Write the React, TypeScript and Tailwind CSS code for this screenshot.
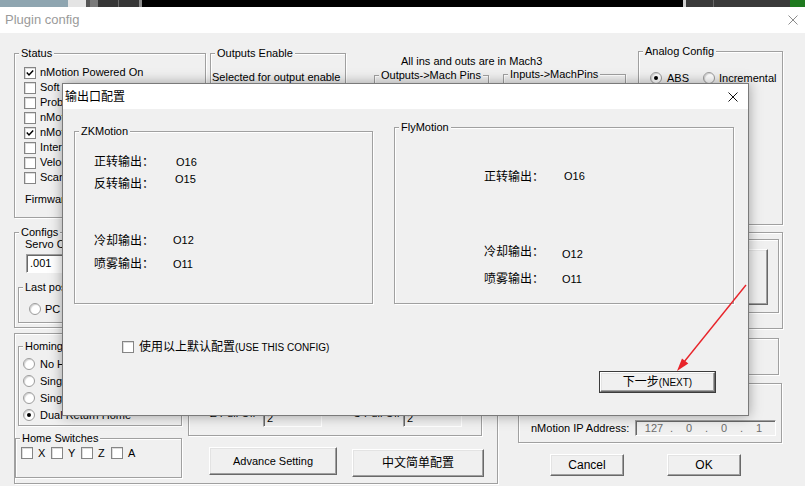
import React from "react";

type P = { className?: string; children?: React.ReactNode };

function Group({ label, className = "", children }: P & { label?: string }) {
  return (
    <div
      className={`relative shrink-0 border border-[#a0a0a0] shadow-[inset_1px_1px_0_#ffffff,1px_1px_0_#ffffff] ${className}`}
    >
      {label ? (
        <span className="absolute left-[4px] top-[-8px] whitespace-nowrap bg-[#f0f0f0] px-[2px] text-[11px] leading-[14px]">
          {label}
        </span>
      ) : null}
      {children}
    </div>
  );
}

function Check({ checked = false, className = "" }: { checked?: boolean; className?: string }) {
  return (
    <span
      className={`flex h-[12px] w-[12px] shrink-0 items-center justify-center border border-[#858585] bg-white shadow-[inset_1px_1px_0_#dcdcdc] ${className}`}
    >
      {checked ? (
        <svg width="8" height="8" viewBox="0 0 8 8">
          <path d="M0.8 3.6 L3 5.9 L7.2 1.4" fill="none" stroke="#000" strokeWidth="1.5" />
        </svg>
      ) : null}
    </span>
  );
}

function Radio({ checked = false }: { checked?: boolean }) {
  return (
    <span className="flex h-[12px] w-[12px] shrink-0 items-center justify-center rounded-full border border-[#9c9c9c] bg-white shadow-[inset_1px_1px_1px_rgba(0,0,0,0.18)]">
      {checked ? <span className="h-[4px] w-[4px] rounded-full bg-black" /> : null}
    </span>
  );
}

function Btn({ className = "", children }: P) {
  return (
    <div
      className={`flex shrink-0 items-center justify-center whitespace-nowrap border border-t-[#ffffff] border-l-[#ffffff] border-r-[#696969] border-b-[#696969] bg-[#f0f0f0] shadow-[inset_-1px_-1px_0_#a0a0a0,inset_1px_1px_0_#e3e3e3] text-[11px] ${className}`}
    >
      {children}
    </div>
  );
}

const sunken =
  "border border-t-[#a0a0a0] border-l-[#a0a0a0] border-r-[#ffffff] border-b-[#ffffff] shadow-[inset_1px_1px_0_#696969]";

const statusItems: [string, boolean][] = [
  ["nMotion Powered On", true],
  ["Soft Limits", false],
  ["Probe Active", false],
  ["nMotion Running", false],
  ["nMotion Connected", true],
  ["Interpolation", false],
  ["Velocity Mode", false],
  ["Scan Mode", false],
];

const homing: [string, boolean][] = [
  ["No Homing", false],
  ["Single Home Switch", false],
  ["Single Return Home", false],
  ["Dual Return Home", true],
];

export default function App() {
  return (
    <div className="relative h-[486px] w-[805px] overflow-hidden bg-[#f0f0f0] font-['Liberation_Sans','Noto_Sans_CJK_SC',sans-serif] text-[11px] text-black">
      {/* desktop strip behind window */}
      <div className="flex h-[7px]">
        <div className="w-[68px] bg-[#8ea5b0]" />
        <div className="w-[18px] bg-[#e4e4e4]" />
        <div className="w-[4px] bg-[#555555]" />
        <div className="w-[8px] bg-[#7a7a7a]" />
        <div className="w-[20px] bg-[#363636]" />
        <div className="w-[1px] bg-[#6a6a6a]" />
        <div className="w-[20px] bg-[#363636]" />
        <div className="w-[3px] bg-[#8a8a8a]" />
        <div className="w-[541px] bg-black" />
        <div className="w-[3px] bg-[#cfcfcf]" />
        <div className="w-[27px] bg-[#3a3a3a]" />
        <div className="w-[1px] bg-[#666666]" />
        <div className="w-[76px] bg-[#3a3a3a]" />
        <div className="w-[15px] bg-[#1f7a1f]" />
      </div>

      {/* Plugin config title bar */}
      <div className="flex h-[26px] items-center justify-between bg-white pl-[5px] pr-[7px]">
        <span className="text-[13px] leading-[16px] text-[#9a9a9a]">Plugin config</span>
        <svg width="10" height="10" viewBox="0 0 10 10">
          <path d="M0.5 0.5 L9.5 9.5 M9.5 0.5 L0.5 9.5" stroke="#8c8c8c" strokeWidth="1" />
        </svg>
      </div>

      {/* Row 1 */}
      <div className="flex items-start pt-[18px]">
        <Group label="Status" className="ml-[14px] mt-[2px] h-[165px] w-[192px]">
          <div className="flex flex-col pt-[11px]">
            {statusItems.map(([t, c]) => (
              <div key={t} className="flex h-[15px] items-center gap-[4px] pl-[9px]">
                <Check checked={c} />
                <span className="whitespace-nowrap leading-[15px]">{t}</span>
              </div>
            ))}
            <div className="mt-[7px] whitespace-nowrap pl-[10px] leading-[15px]">Firmware Version:</div>
          </div>
        </Group>

        <Group label="Outputs Enable" className="ml-[4px] mt-[2px] h-[165px] w-[136px]">
          <div className="whitespace-nowrap pl-[1px] pt-[16px] leading-[14px]">Selected for output enable</div>
        </Group>

        <div className="ml-[28px] mt-[3px] flex w-[252px] shrink-0 flex-col">
          <div className="whitespace-nowrap pl-[27px] leading-[14px]">All ins and outs are in Mach3</div>
          <div className="flex items-start">
            <Group label="Outputs->Mach Pins" className="mt-[7px] h-[140px] w-[115px]" />
            <Group label="Inputs->MachPins" className="ml-[14px] mt-[6px] h-[140px] w-[123px]" />
          </div>
        </div>

        <Group label="Analog Config" className="ml-[12px] h-[174px] w-[145px]">
          <div className="flex items-center pl-[11px] pt-[19px]">
            <Radio checked />
            <span className="ml-[5px] leading-[14px]">ABS</span>
            <span className="ml-[14px]">
              <Radio />
            </span>
            <span className="ml-[4px] whitespace-nowrap leading-[14px]">Incremental</span>
          </div>
        </Group>
      </div>

      {/* Row 2 */}
      <div className="flex items-start pt-[7px]">
        <div className="ml-[14px] flex w-[484px] shrink-0 flex-col">
          <Group label="Configs" className="h-[96px] w-[190px]">
            <div className="flex flex-col">
              <div className="whitespace-nowrap pl-[10px] pt-[5px] leading-[13px]">Servo Cycle Time</div>
              <div className={`ml-[11px] mt-[3px] h-[19px] w-[100px] bg-white pl-[3px] leading-[17px] ${sunken}`}>.001</div>
              <Group label="Last position" className="ml-[3px] mt-[14px] h-[36px] w-[180px]">
                <div className="flex items-center gap-[4px] pl-[10px] pt-[15px]">
                  <Radio />
                  <span className="leading-[12px]">PC</span>
                </div>
              </Group>
            </div>
          </Group>

          <div className="mt-[5px] flex h-[151px] w-[484px] items-start border border-[#a0a0a0] shadow-[inset_1px_1px_0_#ffffff,1px_1px_0_#ffffff]">
            <div className="flex w-[167px] shrink-0 flex-col">
              <Group label="Homing" className="ml-[3px] mt-[12px] h-[80px] w-[164px]">
                <div className="flex flex-col pl-[4px] pt-[8px]">
                  {homing.map(([t, c]) => (
                    <div key={t} className="flex h-[17px] items-center gap-[5px]">
                      <Radio checked={c} />
                      <span className="whitespace-nowrap leading-[14px]">{t}</span>
                    </div>
                  ))}
                </div>
              </Group>
              <Group label="Home Switches" className="mt-[12px] h-[40px] w-[167px]">
                <div className="flex pl-[5px] pt-[8px]">
                  {["X", "Y", "Z", "A"].map((a) => (
                    <div key={a} className="flex w-[30px] items-center gap-[5px]">
                      <Check />
                      <span className="leading-[12px]">{a}</span>
                    </div>
                  ))}
                </div>
              </Group>
            </div>

            <div className="ml-[6px] flex flex-col">
              <Group className="mt-[12px] h-[90px] w-[294px]">
                <div className="flex items-start pl-[21px] pt-[62px]">
                  <span className="-mt-[3px] w-[53px] whitespace-nowrap leading-[14px]">Z Pull Off</span>
                  <div className={`h-[18px] w-[59px] bg-[#f0f0f0] pl-[3px] leading-[16px] ${sunken}`}>2</div>
                  <span className="-mt-[3px] ml-[31px] w-[50px] whitespace-nowrap leading-[14px]">C Pull Off</span>
                  <div className={`h-[18px] w-[59px] bg-[#f0f0f0] pl-[3px] leading-[16px] ${sunken}`}>2</div>
                </div>
              </Group>
              <div className="ml-[21px] flex items-start">
                <Btn className="mt-[11px] h-[28px] w-[128px]">Advance Setting</Btn>
                <Btn className="ml-[15px] mt-[13px] h-[28px] w-[132px] text-[12px]">中文简单配置</Btn>
              </div>
            </div>
          </div>
        </div>

        <div className="ml-[20px] flex w-[265px] shrink-0 flex-col">
          <Group className="flex h-[97px] w-[265px] flex-col items-end">
            <Group className="mr-[3px] mt-[6px] flex h-[74px] w-[200px] flex-col items-end">
              <Btn className="mr-[10px] mt-[9px] h-[56px] w-[100px]">{""}</Btn>
            </Group>
          </Group>
          <Group className="mr-[4px] mt-[9px] h-[37px] w-[230px] self-end" />
          <Group className="mt-[8px] h-[60px] w-[264px]">
            <div className="flex items-center pt-[36px]">
              <span className="w-[116px] whitespace-nowrap pl-[12px] leading-[14px]">nMotion IP Address:</span>
              <div className={`flex h-[16px] w-[141px] items-center bg-[#f0f0f0] pl-[5px] text-[#6d6d6d] ${sunken}`}>
                <span className="w-[26px] text-center">127</span>
                <span className="w-[9px] text-center">.</span>
                <span className="w-[26px] text-center">0</span>
                <span className="w-[9px] text-center">.</span>
                <span className="w-[26px] text-center">0</span>
                <span className="w-[9px] text-center">.</span>
                <span className="w-[26px] text-center">1</span>
              </div>
            </div>
          </Group>
          <div className="mt-[11px] flex">
            <Btn className="ml-[32px] h-[22px] w-[74px] text-[12px]">Cancel</Btn>
            <Btn className="ml-[43px] h-[22px] w-[74px] text-[12px]">OK</Btn>
          </div>
        </div>
      </div>

      {/* Dialog 输出口配置 */}
      <div className="absolute left-[62px] top-[83px] flex h-[333px] w-[687px] flex-col border border-[#7a7a7a] bg-[#f0f0f0] shadow-[0_0_12px_rgba(0,0,0,0.35)]">
        <div className="flex h-[25px] shrink-0 items-center justify-between bg-white pl-[2px] pr-[10px]">
          <span className="text-[12px] leading-[16px]">输出口配置</span>
          <svg width="10" height="10" viewBox="0 0 10 10">
            <path d="M0.5 0.5 L9.5 9.5 M9.5 0.5 L0.5 9.5" stroke="#111" strokeWidth="1" />
          </svg>
        </div>
        <div className="flex flex-col">
          <div className="flex items-start pt-[18px]">
            <Group label="ZKMotion" className="ml-[11px] mt-[4px] h-[173px] w-[299px]">
              <div className="flex flex-col pl-[19px]">
                <div className="mt-[22px] flex h-[16px] items-start">
                  <span className="w-[82px] text-[12px] leading-[16px]">正转输出：</span>
                  <span className="text-[11px] leading-[16px]">O16</span>
                </div>
                <div className="mt-[6px] flex h-[16px] items-start">
                  <span className="w-[81px] text-[12px] leading-[16px]">反转输出：</span>
                  <span className="-mt-[5px] text-[11px] leading-[16px]">O15</span>
                </div>
                <div className="mt-[41px] flex h-[16px] items-start">
                  <span className="w-[79px] text-[12px] leading-[16px]">冷却输出：</span>
                  <span className="-mt-[1px] text-[11px] leading-[16px]">O12</span>
                </div>
                <div className="mt-[7px] flex h-[16px] items-start">
                  <span className="w-[79px] text-[12px] leading-[16px]">喷雾输出：</span>
                  <span className="text-[11px] leading-[16px]">O11</span>
                </div>
              </div>
            </Group>
            <Group label="FlyMotion" className="ml-[21px] h-[177px] w-[340px]">
              <div className="flex flex-col pl-[89px]">
                <div className="mt-[41px] flex h-[16px] items-start">
                  <span className="w-[80px] text-[12px] leading-[16px]">正转输出：</span>
                  <span className="-mt-[1px] text-[11px] leading-[16px]">O16</span>
                </div>
                <div className="mt-[59px] flex h-[16px] items-start">
                  <span className="w-[78px] text-[12px] leading-[16px]">冷却输出：</span>
                  <span className="mt-[2px] text-[11px] leading-[16px]">O12</span>
                </div>
                <div className="mt-[11px] flex h-[16px] items-start">
                  <span className="w-[78px] text-[12px] leading-[16px]">喷雾输出：</span>
                  <span className="text-[11px] leading-[16px]">O11</span>
                </div>
              </div>
            </Group>
          </div>
          <div className="mt-[35px] flex h-[16px] items-center gap-[5px] pl-[59px]">
            <Check />
            <span className="whitespace-nowrap leading-[16px]">
              <span className="text-[12px]">使用以上默认配置</span>
              <span className="text-[10px]">(USE THIS CONFIG)</span>
            </span>
          </div>
          <div className="ml-[536px] mt-[16px] h-[22px] w-[117px] border border-[#3c3c3c]">
            <Btn className="h-full w-full">
              <span className="text-[12px]">下一步</span>
              <span className="text-[10px]">(NEXT)</span>
            </Btn>
          </div>
        </div>
      </div>

      {/* red annotation arrow */}
      <svg className="pointer-events-none absolute left-0 top-0" width="805" height="486" viewBox="0 0 805 486">
        <line x1="746" y1="285" x2="684" y2="362" stroke="#e8242a" strokeWidth="1.4" />
        <polygon points="677,371 688.3,363.4 682,358.4" fill="#e8242a" />
      </svg>
    </div>
  );
}
